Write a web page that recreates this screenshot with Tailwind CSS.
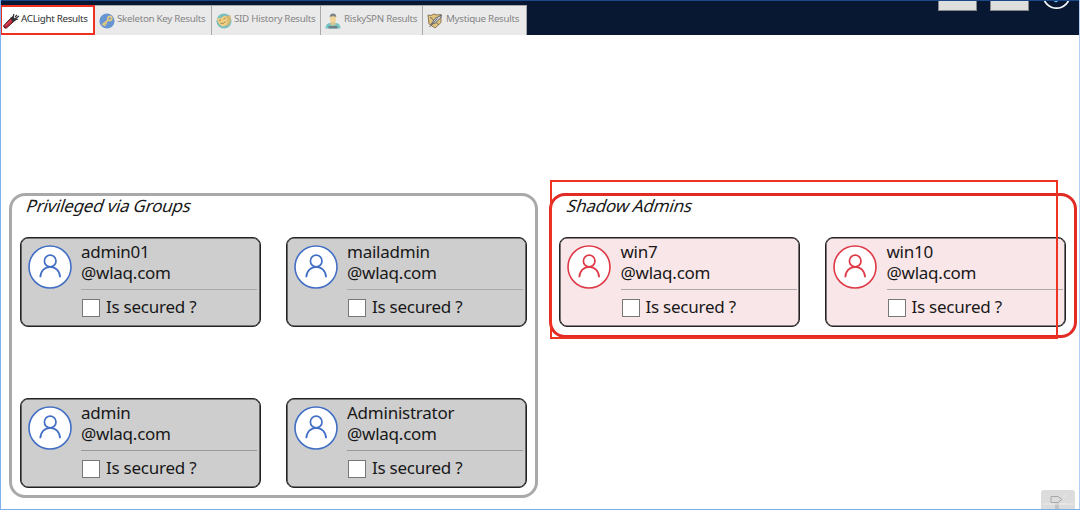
<!DOCTYPE html>
<html lang="en">
<head>
<meta charset="utf-8">
<title>ACLight Results</title>
<script src="https://cdn.jsdelivr.net/npm/@tailwindcss/browser@4"></script>
</head>
<body class="bg-white">
<svg class="hidden">
  <symbol id="user" viewBox="0 0 44 44">
    <circle cx="22" cy="22" r="21" fill="#fff" stroke="currentColor" stroke-width="1.6"/>
    <circle cx="22.2" cy="16" r="5.8" fill="none" stroke="currentColor" stroke-width="1.7"/>
    <path d="M12.300 32.200C12.500 26 17 21.800 22.200 21.800S31.900 26 32.100 32.200" fill="none" stroke="currentColor" stroke-width="1.7"/>
  </symbol>
</svg>
<div class="relative flex h-[510px] w-[1080px] flex-col overflow-hidden bg-white font-['Noto_Sans',sans-serif] text-[#181818]">
  <header class="flex h-[35px] shrink-0 justify-between border-t border-[#1b4888] bg-[#081732]">
    <nav class="mt-1 flex h-[30px] text-[9.8px] tracking-[-0.3px] text-[#858585]">
      <div class="flex w-[95px] items-center border-2 border-[#f0301f] bg-white text-[#303030]">
        <svg class="mt-px h-[18px] w-[18px] shrink-0" viewBox="0 0 18 18"><path d="M1.500 14 8.500 6.500l3 3-7 6.500q-2 1-3-2Z" fill="#c3263b" stroke="#4a1820"/><path d="m3.500 13.500 6-5.500" stroke="#ed5965"/><path d="m8 6 3-2 3 4-3 2.500Z" fill="#343034"/><path d="m11 5 1-3m1 5 4-3m-4 4 3-1m-3-2 2-2" stroke="#343034" stroke-width="1.200"/></svg>
        <span class="-mt-0.5 ml-px whitespace-nowrap">ACLight Results</span>
      </div>
      <div class="flex w-[117px] items-center border-t border-r border-[#a9a9a9] bg-[#eaeaea] pl-[4px]">
        <svg class="mt-px h-4 w-4" viewBox="0 0 16 16"><circle cx="8" cy="8" r="7.600" fill="#6794d3"/><g fill="none" stroke="#dfc782" stroke-width="1.800"><circle cx="10.800" cy="5.500" r="2"/><path d="m9.300 7-6 5m1.500-1 1.500 2m0-3.200 1.200 1.500"/></g></svg>
        <span class="-mt-[3px] ml-[2px] whitespace-nowrap">Skeleton Key Results</span>
      </div>
      <div class="flex w-[109px] items-center border-t border-r border-[#a9a9a9] bg-[#eaeaea] pl-[4px]">
        <svg class="mt-px h-4 w-4" viewBox="0 0 16 16"><circle cx="8" cy="8" r="7.600" fill="#79bfc0"/><path d="M7 3q4 1 7-1l1 3q0 6-4 8-5-3-4-10Z" fill="#d4b873"/><path d="M.8 5.500Q5 5.500 9.500 2.500q2.500 3.500 2 7-1 3.500-4.500 4Q2 12 .8 5.500Z" fill="#efce82"/><path d="m3 7.500 2-.7m2.500-.8 2-.7m-5 5q3.500 1.200 5-2" fill="none" stroke="#a78a59"/></svg>
        <span class="-mt-[3px] ml-[2px] whitespace-nowrap">SID History Results</span>
      </div>
      <div class="flex w-[102px] items-center border-t border-r border-[#a9a9a9] bg-[#eaeaea] pl-[4px]">
        <svg class="mt-px h-4 w-4" viewBox="0 0 16 16"><path d="M.5 15.500q0-5.500 5-5.500h5q5 0 5 5.500Z" fill="#78c5c5"/><path d="M5.500 8.500h5v3q-2.500 2-5 0Z" fill="#dcc590"/><ellipse cx="8" cy="5.500" rx="3.200" ry="4" fill="#f0d69a"/><path d="M4.700 4Q4.500.5 8 .5t3.300 3.500Q8 2.500 4.700 4Z" fill="#7e8489"/><path d="M3.500 13h9v2.500h-9Z" fill="#6f8189"/></svg>
        <span class="-mt-[3px] ml-[3px] whitespace-nowrap">RiskySPN Results</span>
      </div>
      <div class="flex w-[104px] items-center border-t border-r border-[#a9a9a9] bg-[#eaeaea] pl-[4px]">
        <svg class="mt-px h-4 w-4" viewBox="0 0 16 16"><path d="m1 2 3 .5L7 1l3 1 4-.5v8L8 15l-6-4Z" fill="#e1c27c" stroke="#8c7b5b"/><path d="m3 4 9 8" stroke="#6e6b67"/><path d="M14.500 2 8 5.500l-4 6L8.500 10l5-5Z" fill="#d3d3d3" stroke="#65676a"/><path d="m2.500 14 8-8.500" stroke="#65676a"/></svg>
        <span class="-mt-[3px] ml-[3px] whitespace-nowrap">Mystique Results</span>
      </div>
    </nav>
    <div class="flex gap-[13px] pr-[8px]">
      <div class="h-[10px] w-[39px] border border-t-0 border-[#85878a] bg-[#dedede]"></div>
      <div class="h-[10px] w-[39px] border border-t-0 border-[#85878a] bg-[#dedede]"></div>
      <svg class="h-[10px] w-[30px]" viewBox="0 0 30 10"><circle cx="14.500" cy="-6" r="13.200" fill="none" stroke="#f3f6fa" stroke-width="1.800"/><circle cx="14" cy="-.7" r="2" fill="#55c4ef"/></svg>
    </div>
  </header>

  <main class="flex items-start gap-[11px] pt-[158px] pl-[9px] text-[17px] leading-[21px] tracking-[-0.24px]">
    <section class="h-[305px] w-[529px] rounded-[16px] border-3 border-[#a9a9a9] pl-[8px]">
      <h2 class="ml-[7px] h-[41px] origin-bottom-left -skew-x-[18deg] whitespace-nowrap"><span class="relative -top-px -left-[10px]">Privileged via Groups</span></h2>
      <div class="grid grid-cols-[241px_241px] gap-x-[25px] gap-y-[71px]">
        <article class="flex h-[90px] rounded-[8px] border border-[#222] bg-[#cecece] pt-[3px] pl-[6.500px] shadow-[inset_0_0_0_0.6px_#222]">
          <svg class="mt-[4px] h-[44px] w-[44px] text-[#426fc5]"><use href="#user"/></svg>
          <div class="ml-[9.500px] w-[176px]"><p>admin01</p><p>@wlaq.com</p><hr class="mt-[6px] border-[#aaa]">
          <label class="mt-[6px] flex items-center"><i class="mt-[3px] ml-px h-[18px] w-[18px] border border-[#777] bg-white"></i><span class="ml-[6px]">Is secured ?</span></label></div>
        </article>
        <article class="flex h-[90px] rounded-[8px] border border-[#222] bg-[#cecece] pt-[3px] pl-[6.500px] shadow-[inset_0_0_0_0.6px_#222]">
          <svg class="mt-[4px] h-[44px] w-[44px] text-[#426fc5]"><use href="#user"/></svg>
          <div class="ml-[9.500px] w-[176px]"><p>mailadmin</p><p>@wlaq.com</p><hr class="mt-[6px] border-[#aaa]">
          <label class="mt-[6px] flex items-center"><i class="mt-[3px] ml-px h-[18px] w-[18px] border border-[#777] bg-white"></i><span class="ml-[6px]">Is secured ?</span></label></div>
        </article>
        <article class="flex h-[90px] rounded-[8px] border border-[#222] bg-[#cecece] pt-[3px] pl-[6.500px] shadow-[inset_0_0_0_0.6px_#222]">
          <svg class="mt-[4px] h-[44px] w-[44px] text-[#426fc5]"><use href="#user"/></svg>
          <div class="ml-[9.500px] w-[176px]"><p>admin</p><p>@wlaq.com</p><hr class="mt-[6px] border-[#999]">
          <label class="mt-[6px] flex items-center"><i class="mt-[3px] ml-px h-[18px] w-[18px] border border-[#777] bg-white"></i><span class="ml-[6px]">Is secured ?</span></label></div>
        </article>
        <article class="flex h-[90px] rounded-[8px] border border-[#222] bg-[#cecece] pt-[3px] pl-[6.500px] shadow-[inset_0_0_0_0.6px_#222]">
          <svg class="mt-[4px] h-[44px] w-[44px] text-[#426fc5]"><use href="#user"/></svg>
          <div class="ml-[9.500px] w-[176px]"><p>Administrator</p><p>@wlaq.com</p><hr class="mt-[6px] border-[#999]">
          <label class="mt-[6px] flex items-center"><i class="mt-[3px] ml-px h-[18px] w-[18px] border border-[#777] bg-white"></i><span class="ml-[6px]">Is secured ?</span></label></div>
        </article>
      </div>
    </section>
    <section class="h-[145px] w-[528px] rounded-[16px] border-3 border-[#e32b25] pl-[7px]">
      <h2 class="ml-[7px] h-[41px] origin-bottom-left -skew-x-[18deg] whitespace-nowrap"><span class="relative -top-px -left-[8.500px]">Shadow Admins</span></h2>
      <div class="grid grid-cols-[241px_241px] gap-x-[25px]">
        <article class="flex h-[90px] rounded-[8px] border border-[#222] bg-[#f9e6e8] pt-[3px] pl-[7px] shadow-[inset_0_0_0_0.6px_#222]">
          <svg class="mt-[4px] h-[44px] w-[44px] text-[#df3947]"><use href="#user"/></svg>
          <div class="ml-[9.500px] w-[176px]"><p>win7</p><p>@wlaq.com</p><hr class="mt-[6px] border-[#aaa]">
          <label class="mt-[6px] flex items-center"><i class="mt-[3px] ml-px h-[18px] w-[18px] border border-[#777] bg-white"></i><span class="ml-[6px]">Is secured ?</span></label></div>
        </article>
        <article class="flex h-[90px] rounded-[8px] border border-[#222] bg-[#f9e6e8] pt-[3px] pl-[7px] shadow-[inset_0_0_0_0.6px_#222]">
          <svg class="mt-[4px] h-[44px] w-[44px] text-[#df3947]"><use href="#user"/></svg>
          <div class="ml-[9.500px] w-[176px]"><p>win10</p><p>@wlaq.com</p><hr class="mt-[6px] border-[#aaa]">
          <label class="mt-[6px] flex items-center"><i class="mt-[3px] ml-px h-[18px] w-[18px] border border-[#777] bg-white"></i><span class="ml-[6px]">Is secured ?</span></label></div>
        </article>
      </div>
    </section>
  </main>

  <div class="absolute top-[180px] left-[550px] h-[159px] w-[508px] border-2 border-[#ef3323]"></div>
  <div class="absolute right-[5px] bottom-0 h-[20px] w-[34px] rounded-t-[3px] bg-[#dcdcdc]">
    <svg class="h-full w-full" viewBox="0 0 34 20"><path d="M10 6.500h7l4 3-4 3h-7Zm5 6v7m2-7v7" fill="none" stroke="#a8a8a8"/><path d="M22 6h3m-3 8h3M2 14h31" stroke="#ececec"/></svg>
  </div>
  <div class="absolute inset-y-0 left-0 w-px bg-[#7fb1f2]"></div>
  <div class="absolute inset-y-0 right-0 w-px bg-[#b6cdf5]"></div>
  <div class="absolute inset-x-0 bottom-0 h-px bg-[#79aeea]"></div>
</div>
</body>
</html>
